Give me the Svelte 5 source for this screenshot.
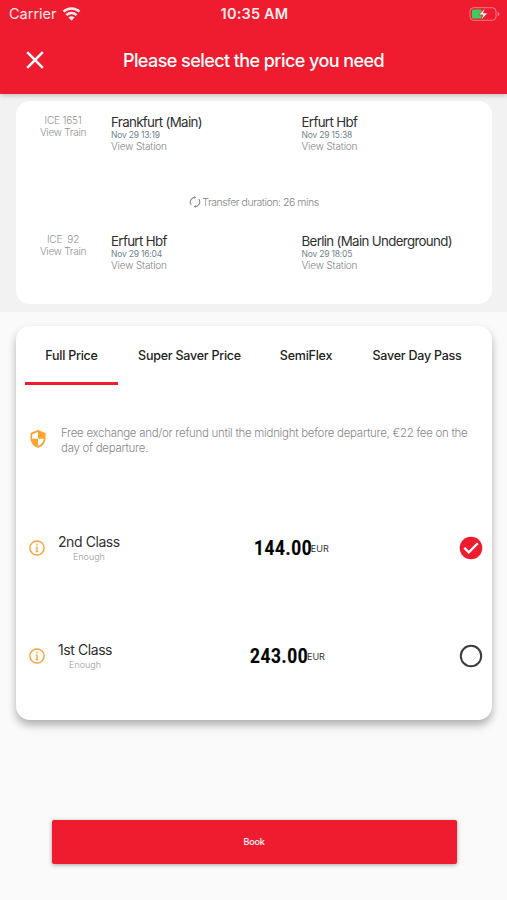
<script>
  const legs = [
    {
      train: 'ICE 1651',
      from: { name: 'Frankfurt (Main)', time: 'Nov 29 13:19' },
      to: { name: 'Erfurt Hbf', time: 'Nov 29 15:38' }
    },
    {
      train: 'ICE  92',
      from: { name: 'Erfurt Hbf', time: 'Nov 29 16:04' },
      to: { name: 'Berlin (Main Underground)', time: 'Nov 29 18:05' }
    }
  ];
  const tabs = ['Full Price', 'Super Saver Price', 'SemiFlex', 'Saver Day Pass'];
  const fares = [
    { name: '2nd Class', price: '144.00' },
    { name: '1st Class', price: '243.00' }
  ];
  let activeTab = $state(0);
  let selected = $state(0);
</script>

{#snippet station(stop)}
  <div class="station">
    <div class="name">{stop.name}</div>
    <div class="time">{stop.time}</div>
    <div class="link">View Station</div>
  </div>
{/snippet}

{#snippet legRow(leg)}
  <div class="leg">
    <div class="train">
      <div class="number">{leg.train}</div>
      <div class="view">View Train</div>
    </div>
    {@render station(leg.from)}
    {@render station(leg.to)}
  </div>
{/snippet}

<div class="screen">
  <header>
    <div class="status">
      <div class="carrier">
        <span>Carrier</span>
        <svg width="19" height="14" viewBox="0 0 18 14" fill="none" stroke="#fff" stroke-width="2.5">
          <path d="M1 4.700a11.400 11.400 0 0 1 16 0" />
          <path d="M3.900 8.100a7.300 7.300 0 0 1 10.200 0" />
          <path d="M9 13.700 6 10.600a4.200 4.200 0 0 1 6 0Z" fill="#fff" stroke="none" />
        </svg>
      </div>
      <span class="clock">10:35 AM</span>
      <svg class="battery" width="31" height="14" viewBox="0 0 31 14">
        <rect x="1" y=".7" width="26" height="12.6" rx="3.6" fill="none" stroke="#fff" stroke-opacity=".42" />
        <path d="M28.6 4.7v4.6q2-.8 2-2.3t-2-2.3Z" fill="#fff" fill-opacity=".42" />
        <rect x="3" y="2.6" width="9.5" height="8.8" rx="1.2" fill="#3bce5f" />
        <path d="M16.300 1 9.700 7.900h4.200l-2 5.500 6.900-7.300h-4.300Z" fill="#fff" stroke="#ee1c2e" stroke-width=".7" />
      </svg>
    </div>
    <div class="titlebar">
      <svg class="close" width="18" height="18" viewBox="0 0 18 18" stroke="#fff" stroke-width="2.5">
        <path d="m1.200 1.200 15.600 15.600M16.800 1.200 1.200 16.800" />
      </svg>
      <h1>Please select the price you need</h1>
    </div>
  </header>

  <section class="journey">
    <div class="card trip">
      {@render legRow(legs[0])}
      <div class="transfer">
        <svg width="12" height="12" viewBox="0 0 12 12" fill="none" stroke="#8b8b8b" stroke-width="1.1">
          <path d="M2.200 8.800A4.600 4.600 0 0 1 6.600 1.500M9.800 3.200a4.600 4.600 0 0 1-4.400 7.300" />
          <path d="M5.400 0 7 1.600 5.400 3.200ZM6.600 8.800 5 10.400 6.600 12Z" fill="#8b8b8b" stroke="none" />
        </svg>
        <span>Transfer duration: 26 mins</span>
      </div>
      {@render legRow(legs[1])}
    </div>
  </section>

  <main>
    <div class="card prices">
      <div class="tabs">
        {#each tabs as tab, i}
          <button class="tab t{i}" class:active={activeTab === i} onclick={() => (activeTab = i)}>{tab}</button>
        {/each}
      </div>
      <div class="terms">
        <svg width="16" height="18" viewBox="0 0 16 18">
          <path d="M8 0 .5 3.100v5.100c0 4.400 3.100 8.300 7.500 9.500 4.400-1.200 7.500-5.100 7.500-9.500V3.100Z" fill="#fba32f" />
          <path d="M8 2.100v6.600H2.200V4.300ZM8 8.700h5.800c-.4 3.200-2.600 6-5.800 7Z" fill="#fff" />
        </svg>
        <p>Free exchange and/or refund until the midnight before departure, €22 fee on the<br />day of departure.</p>
      </div>
      {#each fares as fare, i}
        <div class="fare">
          <div class="category">
            <svg width="16" height="16" viewBox="0 0 16 16">
              <circle cx="8" cy="8" r="7.100" fill="none" stroke="#fba540" stroke-width="1.500" />
              <path d="M8 3.700v1.900M6.800 7.300H8v4.200M6.600 11.600h2.800" fill="none" stroke="#fba540" stroke-width="1.300" />
            </svg>
            <div class="class">
              <div class="class-name">{fare.name}</div>
              <div class="stock">Enough</div>
            </div>
          </div>
          <div class="amount"><b>{fare.price}</b><span>EUR</span></div>
          <button class="pick" aria-label={fare.name} onclick={() => (selected = i)}>
            <svg width="24" height="24" viewBox="0 0 24 24" fill="none">
              {#if selected === i}
                <circle cx="12" cy="12" r="11.300" fill="#ee1c2e" />
                <path d="m5.300 11.700 4.500 4.600 9-9" stroke="#fff" stroke-width="2.300" />
              {:else}
                <circle cx="12" cy="12" r="10.200" stroke="#3c3c3c" stroke-width="2" />
              {/if}
            </svg>
          </button>
        </div>
      {/each}
    </div>
    <button class="book">Book</button>
  </main>
</div>

<style>
  :global(body) {
    margin: 0;
  }
  .screen {
    width: 507px;
    height: 900px;
    display: flex;
    flex-direction: column;
    overflow: hidden;
    background: #fafafa;
    font-family: Inter, 'Liberation Sans', sans-serif;
    color: #303030;
    white-space: nowrap;
  }
  .screen * {
    box-sizing: border-box;
  }
  svg {
    display: block;
    flex: none;
  }
  button {
    border: 0;
    padding: 0;
    background: none;
    font: inherit;
    color: inherit;
  }
  header {
    position: relative;
    z-index: 1;
    flex: none;
    height: 94px;
    background: #ee1c2e;
    color: #fff;
    box-shadow: 0 1px 5px rgba(0, 0, 0, 0.25);
  }
  .status {
    height: 27px;
    display: grid;
    grid-template-columns: 1fr auto 1fr;
    align-items: center;
    padding: 0 7px 0 9px;
  }
  .carrier {
    display: flex;
    align-items: center;
    gap: 5px;
    font-size: 14.500px;
    opacity: 0.9;
  }
  .clock {
    font-size: 14.500px;
    font-weight: 600;
    letter-spacing: 0.2px;
    opacity: 0.92;
  }
  .battery {
    justify-self: end;
  }
  .titlebar {
    height: 66px;
    display: grid;
    grid-template-columns: 70px 1fr 70px;
    align-items: center;
  }
  .close {
    justify-self: center;
  }
  h1 {
    margin: 0;
    text-align: center;
    font-size: 18px;
    font-weight: 500;
    letter-spacing: -0.57px;
  }
  .journey {
    flex: none;
    height: 218px;
    padding: 7px 15px 8px 16px;
    background: #f2f2f2;
  }
  .card {
    background: #fff;
    border-radius: 14px;
  }
  .trip {
    height: 203px;
    display: flex;
    flex-direction: column;
    padding-top: 13px;
  }
  .leg {
    display: grid;
    grid-template-columns: 95px 190.500px 1fr;
    height: 39px;
  }
  .train {
    padding-right: 1px;
    text-align: center;
    color: #929292;
    font-weight: 300;
    font-size: 10px;
    line-height: 12px;
  }
  .number {
    letter-spacing: -0.2px;
    white-space: pre;
  }
  .view {
    letter-spacing: -0.25px;
  }
  .name {
    font-size: 13.300px;
    line-height: 16px;
    letter-spacing: -0.66px;
  }
  .time {
    font-size: 8.500px;
    line-height: 10px;
    color: #71848a;
    letter-spacing: -0.2px;
  }
  .link {
    font-size: 10px;
    line-height: 12px;
    font-weight: 300;
    color: #858585;
    letter-spacing: -0.15px;
  }
  .transfer {
    display: flex;
    align-items: center;
    justify-content: center;
    gap: 1px;
    height: 80px;
    padding-top: 18px;
    font-size: 10.500px;
    font-weight: 300;
    color: #858585;
    letter-spacing: -0.46px;
  }
  main {
    display: flex;
    flex-direction: column;
    padding: 14px 15px 0 16px;
  }
  .prices {
    height: 393.500px;
    box-shadow: 0 5px 9px rgba(0, 0, 0, 0.3);
  }
  .tabs {
    display: flex;
    height: 59px;
    padding-left: 9px;
  }
  .tab {
    height: 59px;
    padding-top: 2px;
    border-bottom: 3px solid transparent;
    font-size: 12.500px;
    font-weight: 500;
    letter-spacing: -0.24px;
    color: #222;
  }
  .t0 {
    width: 93px;
  }
  .t1 {
    width: 143px;
  }
  .t2 {
    width: 90px;
  }
  .t3 {
    width: 132px;
  }
  .active {
    border-bottom-color: #ee1c2e;
  }
  .terms {
    display: flex;
    align-items: center;
    gap: 15px;
    height: 109px;
    padding: 0 0 1px 14px;
  }
  .terms p {
    margin: 4px 0 0;
    font-size: 11.500px;
    line-height: 15px;
    font-weight: 300;
    color: #888;
    letter-spacing: -0.29px;
  }
  .fare {
    display: flex;
    justify-content: space-between;
    align-items: center;
    height: 108px;
    padding: 0 9px 0 13px;
  }
  .category {
    display: flex;
    align-items: center;
    gap: 13px;
    padding-right: 3.500px;
  }
  .class {
    text-align: center;
  }
  .class-name {
    font-size: 14px;
    line-height: 17px;
    letter-spacing: -0.42px;
  }
  .stock {
    font-size: 9px;
    line-height: 13px;
    font-weight: 300;
    color: #999;
  }
  .amount {
    display: flex;
    align-items: center;
    color: #000;
  }
  /* narrow DIN-style digits */
  .amount b {
    margin: 1px -8.500px 0 0;
    font-family: Roboto, sans-serif;
    font-size: 19.500px;
    letter-spacing: 0.7px;
    transform: scaleX(0.885);
    transform-origin: left center;
    -webkit-text-stroke: 0.2px #000;
  }
  .amount span {
    font-size: 9px;
    color: #333;
  }
  .pick {
    width: 24px;
    height: 24px;
  }
  .book {
    width: 405px;
    height: 44px;
    margin: 100px 0 0 35.500px;
    border-radius: 2px;
    background: #ee1c2e;
    color: #fff;
    font-size: 9px;
    font-weight: 500;
    letter-spacing: -0.15px;
    box-shadow: 0 1px 4px rgba(0, 0, 0, 0.35);
  }
</style>
